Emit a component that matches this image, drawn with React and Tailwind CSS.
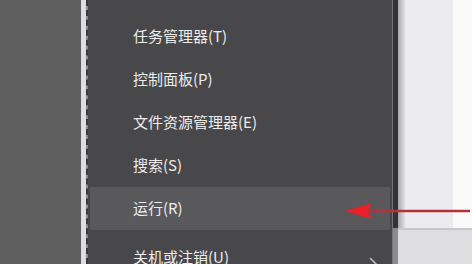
import React from "react";

const items = [
  { label: "任务管理器(T)" },
  { label: "控制面板(P)" },
  { label: "文件资源管理器(E)" },
  { label: "搜索(S)" },
  { label: "运行(R)", active: true },
];

export default function App() {
  return (
    <div
      className="relative flex h-[264px] w-[472px] overflow-hidden bg-[#5f5f5f]"
      style={{ fontFamily: '"Noto Sans CJK SC", "Noto Sans", sans-serif' }}
    >
      {/* Left desktop area */}
      <div className="w-[81px] shrink-0 bg-[#5f5f5f]" />
      <div className="w-[5px] shrink-0 bg-[#dedede]" />
      <div className="w-[2px] shrink-0 border-l-2 border-dashed border-[#3a3a3c] bg-[#8a8a8c]" />

      {/* Context menu */}
      <div className="flex w-[304px] shrink-0 flex-col bg-[#48474a] px-[2px] pt-[8px]">
        <div className="mx-[10px] h-[2px] bg-[#6c6b6e]" />
        <div className="mt-[7px] flex flex-col">
          {items.map((item) => (
            <div
              key={item.label}
              className={`flex h-[43px] items-center pl-[43px] text-[15px] text-[#ececec] ${
                item.active ? "bg-[#59585b]" : ""
              }`}
            >
              {item.label}
            </div>
          ))}
        </div>
        <div className="mx-[10px] mt-[6px] h-[2px] bg-[#6c6b6e]" />
        <div className="mt-[6px] flex h-[43px] items-center justify-between pl-[43px] pr-[12px] text-[15px] text-[#ececec]">
          <span>关机或注销(U)</span>
          <svg width="10" height="16" viewBox="0 0 10 16" className="mt-[14px]">
            <path d="M2 2 L8 8 L2 14" fill="none" stroke="#bdbdbd" strokeWidth="1.6" />
          </svg>
        </div>
      </div>

      {/* Menu right edge */}
      <div className="w-[1px] shrink-0 bg-[#777679]" />
      <div className="flex w-[5px] shrink-0 flex-col">
        <div className="h-[228px] bg-[#333335]" />
        <div className="flex-1 bg-[#8c8c8e]" />
      </div>

      {/* Right window */}
      <div className="flex flex-1 flex-col">
        <div className="flex h-[228px]">
          <div className="w-[8px] bg-gradient-to-r from-[#a8a8aa] to-[#ebebed]" />
          <div className="w-[47px] bg-[#ececee]" />
          <div className="flex-1 bg-[#fafaf8]" />
        </div>
        <div className="h-[2px] bg-[#c8c8ca]" />
        <div className="flex-1 bg-[#dedee0]" />
      </div>

      {/* Red annotation arrow */}
      <svg
        className="absolute left-0 top-0"
        width="472"
        height="264"
        viewBox="0 0 472 264"
      >
        <line x1="362" y1="211" x2="470" y2="211" stroke="#b8303a" strokeWidth="2.5" />
        <path d="M345 211 L372 203 L368 211 L372 219 Z" fill="#e8202c" />
      </svg>
    </div>
  );
}
